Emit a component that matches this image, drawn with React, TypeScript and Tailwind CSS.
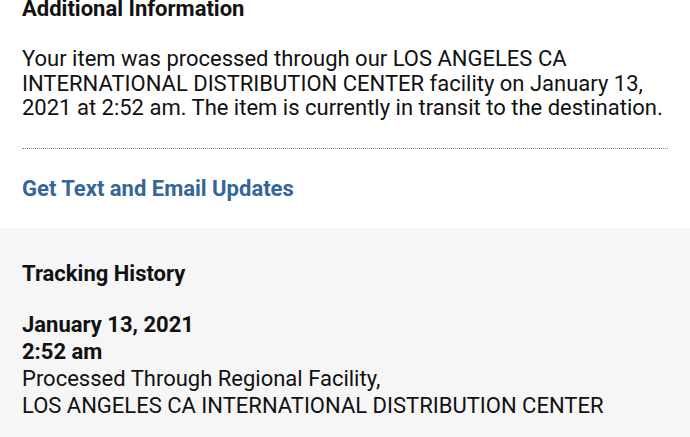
export default function App() {
  return (
    <div className="w-[690px] h-[437px] overflow-hidden bg-white font-['Roboto',sans-serif] text-[#111]">
      <section className="px-[22px]">
        <h2 className="-mt-[3px] text-[22px] leading-[24.5px] font-bold">Additional Information</h2>
        <p className="mt-[25.5px] text-[22px] leading-[24.5px]">
          Your item was processed through our LOS ANGELES CA INTERNATIONAL DISTRIBUTION CENTER facility on January 13,
          2021 at 2:52 am. The item is currently in transit to the destination.
        </p>
        <div className="mt-[27px] border-t border-dotted border-[#8a8a8a]" />
        <a href="#" className="block mt-[28px] pb-[26.5px] text-[22px] leading-[24.5px] font-bold text-[#336699]">
          Get Text and Email Updates
        </a>
      </section>
      <section className="bg-[#f6f6f6] px-[22px] pt-[34px] pb-6">
        <h3 className="text-[22px] leading-[24.5px] font-bold">Tracking History</h3>
        <div className="mt-[25px] text-[22px] leading-[27px]">
          <div className="font-bold">January 13, 2021</div>
          <div className="font-bold">2:52 am</div>
          <div>Processed Through Regional Facility,</div>
          <div>LOS ANGELES CA INTERNATIONAL DISTRIBUTION CENTER</div>
        </div>
      </section>
    </div>
  );
}
